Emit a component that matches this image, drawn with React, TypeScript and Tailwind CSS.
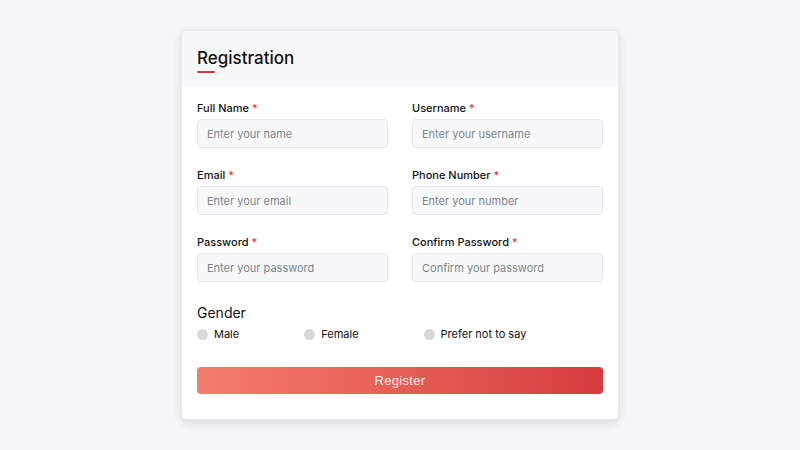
const FIELDS = [
  [
    { label: "Full Name", placeholder: "Enter your name" },
    { label: "Username", placeholder: "Enter your username" },
  ],
  [
    { label: "Email", placeholder: "Enter your email" },
    { label: "Phone Number", placeholder: "Enter your number" },
  ],
  [
    { label: "Password", placeholder: "Enter your password" },
    { label: "Confirm Password", placeholder: "Confirm your password" },
  ],
];

const GENDERS = ["Male", "Female", "Prefer not to say"];

function Field({ label, placeholder }: { label: string; placeholder: string }) {
  return (
    <div className="flex flex-col">
      <label className="text-[11px] leading-4 font-medium text-[#111] mb-[3px]">
        {label} <span className="text-[#e03131]">*</span>
      </label>
      <input
        placeholder={placeholder}
        className="h-[29px] w-full rounded-[4px] border border-[#e6e8eb] bg-[#f7f8fa] px-[9px] text-[11px] text-gray-700 outline-none placeholder:text-[#80858c]"
      />
    </div>
  );
}

export default function App() {
  return (
    <div
      className="flex h-[450px] w-[800px] justify-center bg-[#f5f6f8] pt-[30px]"
      style={{ fontFamily: "Inter, 'Noto Sans', sans-serif" }}
    >
      <div className="flex h-[390px] w-[438px] flex-col rounded-[6px] border border-[#e6e8eb] bg-white shadow-[0_3px_10px_rgba(0,0,0,0.12)]">
        <div className="h-[55px] rounded-t-[6px] bg-[#f7f8fa] px-[15px] pt-[16px]">
          <h1 className="text-[17px] leading-[22px] font-medium text-[#111]">Registration</h1>
          <div className="mt-[2px] h-[2px] w-[18px] rounded bg-[#e03131]" />
        </div>

        <div className="flex flex-col px-[15px] pt-[14px]">
          <div className="flex flex-col gap-[19px]">
            {FIELDS.map((row, i) => (
              <div key={i} className="grid grid-cols-2 gap-x-[24px]">
                {row.map((f) => (
                  <Field key={f.label} label={f.label} placeholder={f.placeholder} />
                ))}
              </div>
            ))}
          </div>

          <h2 className="mt-[21px] text-[14px] leading-5 text-[#111]">Gender</h2>
          <div className="mt-[2px] flex h-[18px] items-center gap-[65px]">
            {GENDERS.map((g) => (
              <label key={g} className="flex items-center gap-[6px] text-[11px] text-[#111]">
                <span className="h-[11px] w-[11px] rounded-full bg-[#d9d9d9]" />
                {g}
              </label>
            ))}
          </div>

          <button
            className="mt-[24px] h-[27px] w-full rounded-[4px] bg-gradient-to-r from-[#f47d6b] to-[#d63b3f] text-[13px] tracking-[0.3px] text-[#fdeceb]"
            style={{ fontFamily: "'Liberation Sans', Arial, sans-serif" }}
          >
            Register
          </button>
        </div>
      </div>
    </div>
  );
}
